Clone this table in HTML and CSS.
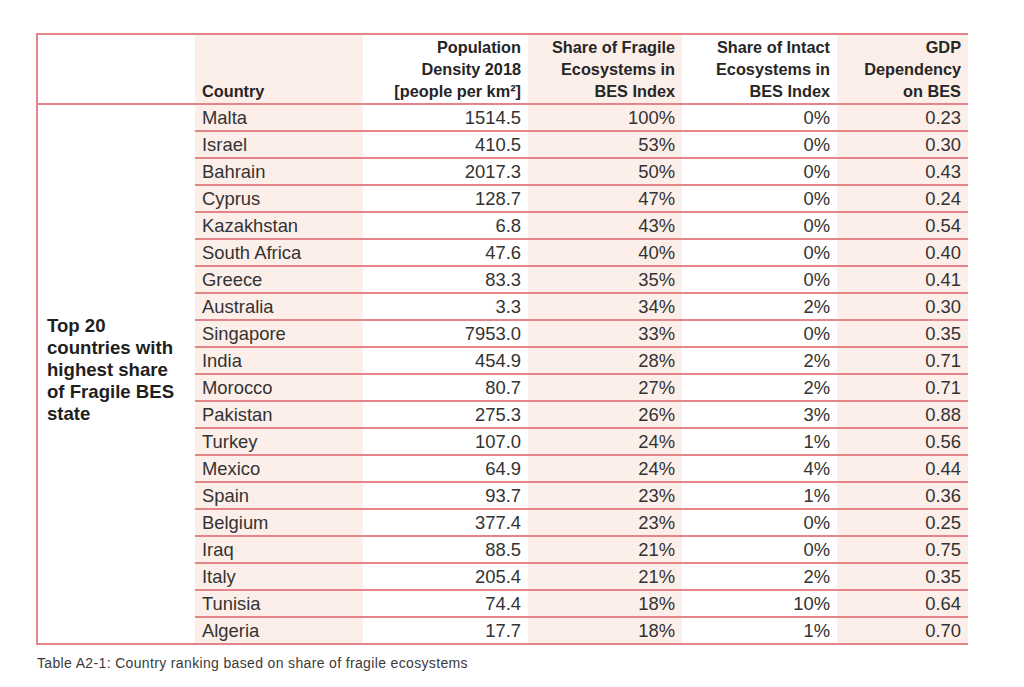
FILE: index.html
```html
<!DOCTYPE html>
<html>
<head>
<meta charset="utf-8">
<link rel="stylesheet" href="styles.css">
</head>
<body>
<div class="page">
<table class="tbl">
<colgroup>
<col class="c-label"><col class="c-country"><col class="c-pop"><col class="c-frag"><col class="c-intact"><col class="c-gdp">
</colgroup>
<thead>
<tr class="head">
<th class="label-h"></th>
<th class="left shade">Country</th>
<th>Population<br>Density 2018<br>[people per km²]</th>
<th class="shade">Share of Fragile<br>Ecosystems in<br>BES Index</th>
<th>Share of Intact<br>Ecosystems in<br>BES Index</th>
<th class="shade">GDP<br>Dependency<br>on BES</th>
</tr>
</thead>
<tbody>
<tr><td class="label" rowspan="20">Top 20<br>countries with<br>highest share<br>of Fragile BES<br>state</td><td class="left shade">Malta</td><td>1514.5</td><td class="shade">100%</td><td>0%</td><td class="shade">0.23</td></tr>
<tr><td class="left shade">Israel</td><td>410.5</td><td class="shade">53%</td><td>0%</td><td class="shade">0.30</td></tr>
<tr><td class="left shade">Bahrain</td><td>2017.3</td><td class="shade">50%</td><td>0%</td><td class="shade">0.43</td></tr>
<tr><td class="left shade">Cyprus</td><td>128.7</td><td class="shade">47%</td><td>0%</td><td class="shade">0.24</td></tr>
<tr><td class="left shade">Kazakhstan</td><td>6.8</td><td class="shade">43%</td><td>0%</td><td class="shade">0.54</td></tr>
<tr><td class="left shade">South Africa</td><td>47.6</td><td class="shade">40%</td><td>0%</td><td class="shade">0.40</td></tr>
<tr><td class="left shade">Greece</td><td>83.3</td><td class="shade">35%</td><td>0%</td><td class="shade">0.41</td></tr>
<tr><td class="left shade">Australia</td><td>3.3</td><td class="shade">34%</td><td>2%</td><td class="shade">0.30</td></tr>
<tr><td class="left shade">Singapore</td><td>7953.0</td><td class="shade">33%</td><td>0%</td><td class="shade">0.35</td></tr>
<tr><td class="left shade">India</td><td>454.9</td><td class="shade">28%</td><td>2%</td><td class="shade">0.71</td></tr>
<tr><td class="left shade">Morocco</td><td>80.7</td><td class="shade">27%</td><td>2%</td><td class="shade">0.71</td></tr>
<tr><td class="left shade">Pakistan</td><td>275.3</td><td class="shade">26%</td><td>3%</td><td class="shade">0.88</td></tr>
<tr><td class="left shade">Turkey</td><td>107.0</td><td class="shade">24%</td><td>1%</td><td class="shade">0.56</td></tr>
<tr><td class="left shade">Mexico</td><td>64.9</td><td class="shade">24%</td><td>4%</td><td class="shade">0.44</td></tr>
<tr><td class="left shade">Spain</td><td>93.7</td><td class="shade">23%</td><td>1%</td><td class="shade">0.36</td></tr>
<tr><td class="left shade">Belgium</td><td>377.4</td><td class="shade">23%</td><td>0%</td><td class="shade">0.25</td></tr>
<tr><td class="left shade">Iraq</td><td>88.5</td><td class="shade">21%</td><td>0%</td><td class="shade">0.75</td></tr>
<tr><td class="left shade">Italy</td><td>205.4</td><td class="shade">21%</td><td>2%</td><td class="shade">0.35</td></tr>
<tr><td class="left shade">Tunisia</td><td>74.4</td><td class="shade">18%</td><td>10%</td><td class="shade">0.64</td></tr>
<tr><td class="left shade">Algeria</td><td>17.7</td><td class="shade">18%</td><td>1%</td><td class="shade">0.70</td></tr>
</tbody>
</table>
<p class="caption">Table A2-1: Country ranking based on share of fragile ecosystems</p>
</div>
</body>
</html>
```
FILE: styles.css
```css
html, body {
  margin: 0;
  padding: 0;
  background: #ffffff;
}
.page {
  padding: 33px 0 0 36px;
  font-family: "Liberation Sans", Arial, sans-serif;
  color: #2a2a2a;
}
.tbl {
  border-collapse: collapse;
  table-layout: fixed;
  width: 931px;
  border-top: 2px solid #e6848a;
  border-bottom: 2px solid #e6848a;
  border-left: 2px solid #e6848a;
}
.c-label { width: 158px; }
.c-country { width: 168px; }
.c-pop { width: 165px; }
.c-frag { width: 154px; }
.c-intact { width: 155px; }
.c-gdp { width: 131px; }

.head th {
  height: 67px;
  vertical-align: bottom;
  text-align: right;
  font-size: 16.3px;
  line-height: 22px;
  font-weight: bold;
  padding: 0 7px 1px 7px;
  border-bottom: 2px solid #e6848a;
  color: #262626;
}
.head th.left { text-align: left; }

tbody td {
  height: 25px;
  padding: 0 7px;
  font-size: 18.4px;
  line-height: 25px;
  text-align: right;
  border-bottom: 2px solid #e6848a;
  white-space: nowrap;
  color: #333333;
}
tbody td.left { text-align: left; }
tbody td.label {
  text-align: left;
  font-weight: bold;
  font-size: 18.6px;
  line-height: 22px;
  padding: 0 0 8px 9px;
  vertical-align: middle;
  white-space: normal;
  color: #1f1f1f;
}
.shade { background: #fcefea; }

.caption {
  margin: 10px 0 0 1px;
  font-size: 14px;
  letter-spacing: 0.35px;
  color: #3a3a3a;
}
```
